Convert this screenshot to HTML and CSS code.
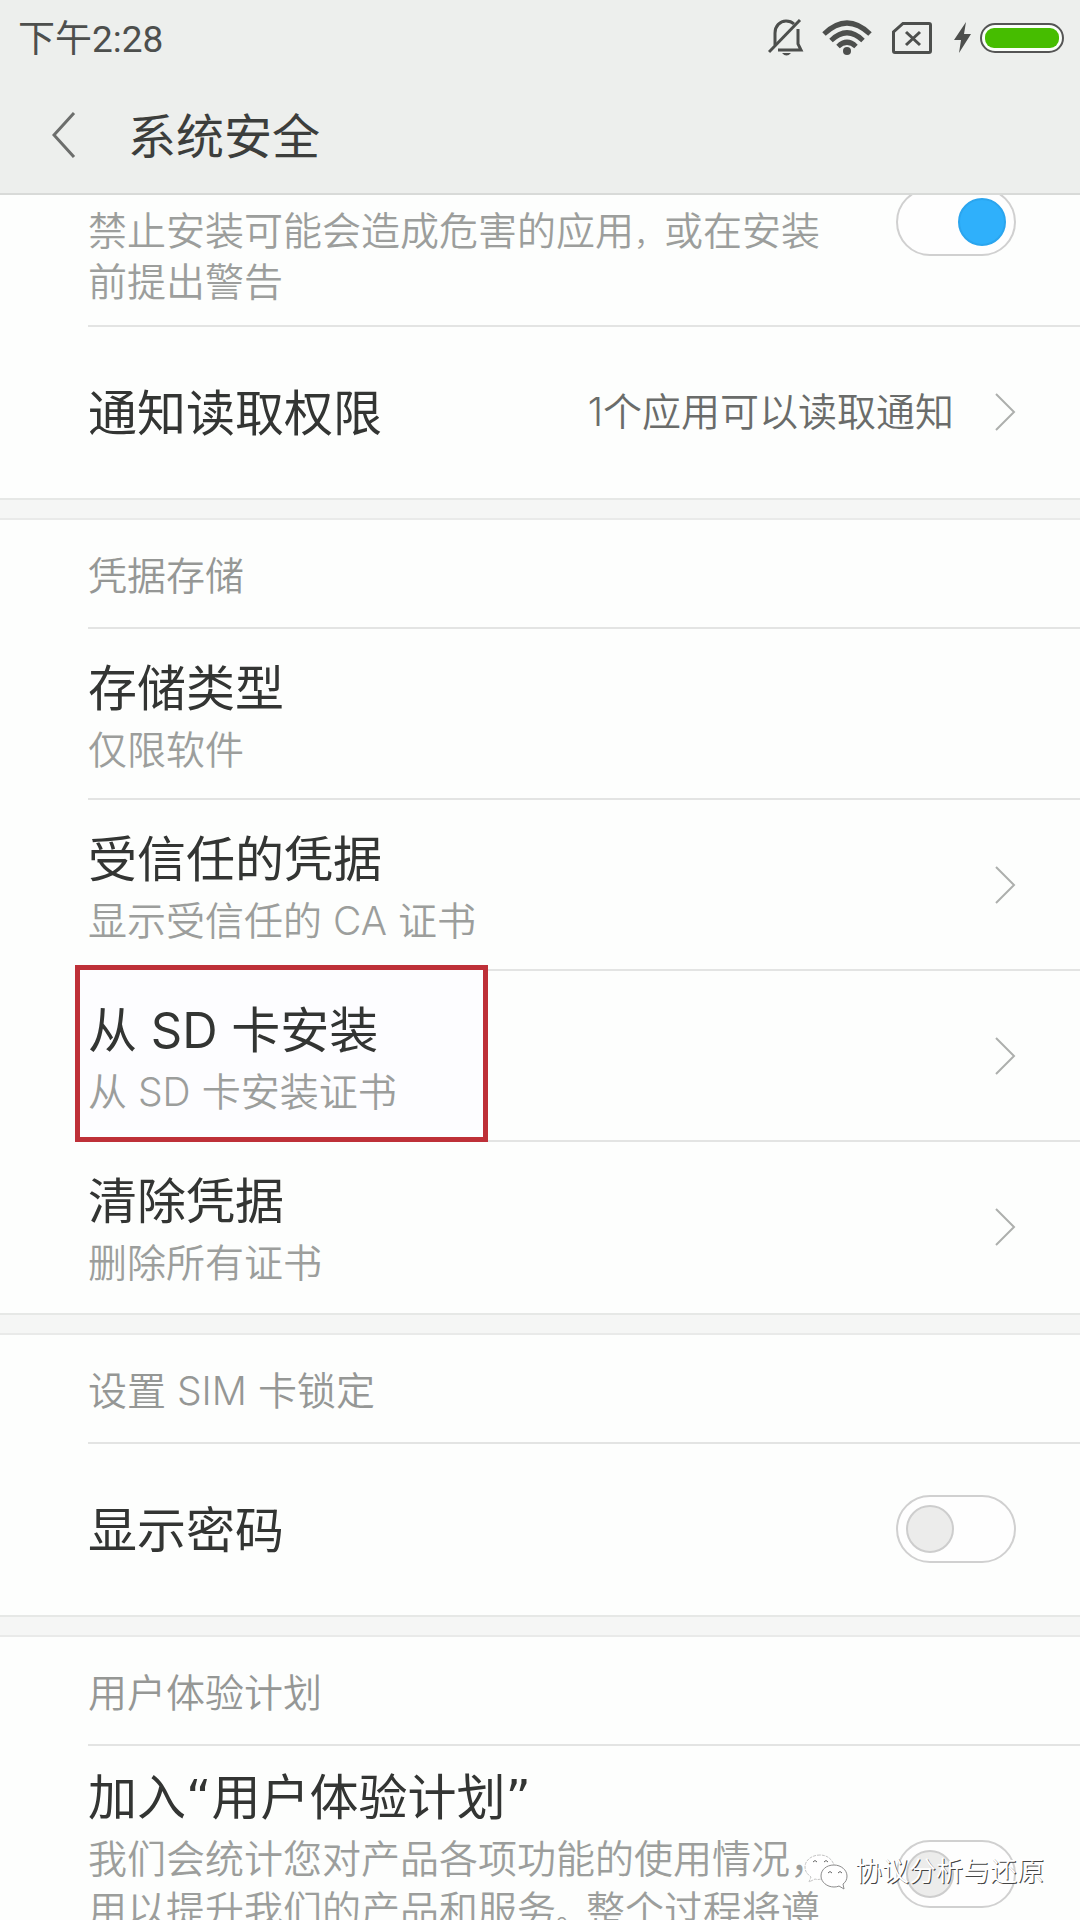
FILE: index.html
```html
<!DOCTYPE html>
<html lang="zh-CN">
<head>
<meta charset="utf-8">
<meta name="viewport" content="width=device-width, initial-scale=1">
<title>系统安全</title>
<link rel="stylesheet" href="styles.css">
</head>
<body>
<header class="top">
  <div class="status">
    <span class="time">下午2:28</span>
    <svg class="icon-bell" width="36" height="38" viewBox="0 0 36 38" fill="none" stroke="#4d4f4d" stroke-width="3">
      <path d="M7 26V14C7 7 12 2 18 2C21 2 24 3 26 5M30 10V25L33 31H10" />
      <path d="M1 33L32 1"/>
      <path d="M14 34Q18.500 39 23 34Z" fill="#4d4f4d" stroke="none"/>
    </svg>
    <svg class="icon-wifi" width="50" height="36" viewBox="0 0 50 36" fill="none" stroke="#4d4f4d" stroke-width="5">
      <path d="M2 14Q25-8 48 14M9 20.500Q25 5 41 20.500M16 26.500Q25 18 34 26.500"/>
      <circle cx="25" cy="31" r="4" fill="#4d4f4d" stroke="none"/>
    </svg>
    <svg class="icon-sim" width="40" height="32" viewBox="0 0 40 32" fill="none" stroke="#4d4f4d" stroke-width="3">
      <path d="M11 1.500H37Q38.500 1.500 38.500 3V29Q38.500 30.500 37 30.500H3Q1.500 30.500 1.500 29V10Z"/>
      <path d="M14 10L28 23M28 10L14 23"/>
    </svg>
    <svg class="icon-bolt" width="18" height="32" viewBox="0 0 18 32" fill="#4d4f4d"><path d="M12 0L0 18H7L5 31L17 12H10Z"/></svg>
    <svg class="icon-battery" width="84" height="30" viewBox="0 0 84 30">
      <rect x="1" y="1" width="82" height="28" rx="14" fill="#fbfffa" stroke="#555" stroke-width="2"/>
      <rect x="5" y="5" width="74" height="20" rx="9" fill="#46bd00"/>
    </svg>
  </div>
  <div class="titlebar">
    <button class="back" type="button" aria-label="返回">
      <svg width="24" height="46" viewBox="0 0 24 46" fill="none" stroke="#6c6e6c" stroke-width="3"><path d="M22 1L2 23L22 45"/></svg>
    </button>
    <h1 class="heading">系统安全</h1>
  </div>
</header>

<main class="list">
  <section class="group">
    <label class="row row-tall">
      <span class="text text-end"><span class="sub">禁止安装可能会造成危害的应用<span class="stop">，</span>或在安装前提出警告</span></span>
      <input class="toggle" type="checkbox" checked>
    </label>
    <a class="row" href="#notifications">
      <span class="text text-single"><span class="name">通知读取权限</span></span>
      <span class="value">1个应用可以读取通知</span>
      <svg class="chevron" width="22" height="38" viewBox="0 0 22 38"><path d="M2 1L20 19L2 37"/></svg>
    </a>
  </section>

  <section class="group">
    <h2 class="caption">凭据存储</h2>
    <div class="row">
      <span class="text"><span class="name">存储类型</span><span class="sub">仅限软件</span></span>
    </div>
    <a class="row" href="#trusted">
      <span class="text"><span class="name">受信任的凭据</span><span class="sub">显示受信任的 CA 证书</span></span>
      <svg class="chevron" width="22" height="38" viewBox="0 0 22 38"><path d="M2 1L20 19L2 37"/></svg>
    </a>
    <a class="row marked" href="#sd">
      <span class="text"><span class="name">从 SD 卡安装</span><span class="sub">从 SD 卡安装证书</span></span>
      <svg class="chevron" width="22" height="38" viewBox="0 0 22 38"><path d="M2 1L20 19L2 37"/></svg>
    </a>
    <a class="row" href="#clear">
      <span class="text"><span class="name">清除凭据</span><span class="sub">删除所有证书</span></span>
      <svg class="chevron" width="22" height="38" viewBox="0 0 22 38"><path d="M2 1L20 19L2 37"/></svg>
    </a>
  </section>

  <section class="group">
    <h2 class="caption">设置 SIM 卡锁定</h2>
    <label class="row">
      <span class="text text-single"><span class="name">显示密码</span></span>
      <input class="toggle" type="checkbox">
    </label>
  </section>

  <section class="group">
    <h2 class="caption">用户体验计划</h2>
    <label class="row row-plan">
      <span class="text text-start"><span class="name">加入<span class="quote">“</span>用户体验计划<span class="quote">”</span></span><span class="sub">我们会统计您对产品各项功能的使用情况，用以提升我们的产品和服务<span class="stop">。</span>整个过程将遵</span></span>
      <input class="toggle" type="checkbox">
    </label>
  </section>
</main>

<div class="watermark">
  <svg width="44" height="38" viewBox="0 0 44 38" fill="#fff" stroke="#8c8c8c" stroke-width="1">
    <path d="M16 2C8 2 1 7 1 14C1 18 3 21 7 24L5 29L11 26Q14 27 17 26L30 12C28 6 23 2 16 2Z" stroke="#c4c4c4" stroke-dasharray="3 1"/>
    <path d="M30 12C22 12 17 17 17 23C17 29 23 34 30 34Q33 34 35 33L40 36L39 31C42 29 43 26 43 23C43 17 37 12 30 12Z"/>
    <path d="M9 9Q11 6 13 9M20 9Q22 6 24 9M24 20Q26 17 28 20M34 20Q36 17 38 20" fill="none" stroke="#666"/>
  </svg>
  <span>协议分析与还原</span>
</div>
</body>
</html>
```

FILE: styles.css
```css
*,
*::before {
  box-sizing: border-box;
}

body {
  margin: 0;
  height: 100vh;
  display: flex;
  flex-direction: column;
  position: relative;
  overflow: hidden;
  background: #fdfefd;
  color: #333533;
  font-family: Inter, "Noto Sans CJK SC", sans-serif;
  font-weight: 350;
}

/* Status bar and title */
.top {
  flex: none;
  position: relative;
  z-index: 1;
  background: #edefed;
  border-bottom: 2px solid #d8dad8;
}

.status {
  height: 76px;
  padding: 0 16px 0 18px;
  display: flex;
  align-items: center;
}

.time {
  flex: 1;
  padding-top: 4px;
  font-family: Roboto, "Noto Sans CJK SC", sans-serif;
  font-size: 37px;
  line-height: 52px;
  font-weight: 400;
  color: #4d4f4d;
}

.icon-wifi { margin-left: 18px; }
.icon-sim { margin-left: 20px; }
.icon-bolt { margin-left: 22px; }
.icon-battery { margin-left: 8px; }

.titlebar {
  height: 117px;
  padding-left: 52px;
  display: flex;
  align-items: center;
}

.back {
  width: 76px;
  height: 46px;
  padding: 0;
  border: 0;
  background: none;
  text-align: left;
  line-height: 0;
}

.heading {
  margin: 0;
  padding-top: 4px;
  font-size: 48px;
  line-height: 71px;
  font-weight: 400;
  color: #3c3e3c;
}

/* The list is scrolled slightly under the header */
.list {
  flex: 1;
  min-height: 0;
  margin-top: -77px;
}

.group + .group::before {
  content: "";
  display: block;
  height: 22px;
  background: #f5f6f5;
  border-top: 2px solid #e6e8e6;
  border-bottom: 2px solid #e9eae9;
}

.caption {
  height: 109px;
  margin: 0 0 0 88px;
  padding-top: 30px;
  border-bottom: 2px solid #e3e4e3;
  font-size: 39px;
  line-height: 51px;
  font-weight: 350;
  color: #959795;
}

.row {
  position: relative;
  min-height: 171px;
  margin-left: 88px;
  padding-right: 64px;
  display: flex;
  align-items: center;
  gap: 40px;
  border-bottom: 2px solid #e3e4e3;
  color: inherit;
  text-decoration: none;
}

.row:last-child { border-bottom-color: transparent; }

.row-tall { min-height: 209px; }
.row-plan { min-height: 258px; }

.text {
  flex: 1;
  z-index: 1;
  display: flex;
  flex-direction: column;
}

.text-end { align-self: flex-end; padding-bottom: 18px; }
.text-start { align-self: flex-start; padding-top: 16px; }
.text-single { padding-top: 4px; }

.name {
  font-size: 49px;
  line-height: 71px;
  font-weight: 400;
}

.quote {
  font-family: "DejaVu Sans", sans-serif;
  line-height: 1;
}

.sub {
  font-size: 39px;
  line-height: 51px;
  color: #9c9e9c;
}

/* Punctuation inside a line is set smaller, to close the gap after it */
.stop {
  font-size: 30px;
  line-height: 1;
}

.value {
  font-size: 39px;
  line-height: 51px;
  color: #6a6c6a;
}

.chevron {
  flex: none;
  fill: none;
  stroke: #adafad;
  stroke-width: 2;
}

.toggle {
  appearance: none;
  flex: none;
  width: 120px;
  height: 68px;
  margin: 0;
  padding: 8px;
  border: 2px solid #d0d0d0;
  border-radius: 34px;
  background: #fefefe;
  display: flex;
}

.toggle::before {
  content: "";
  width: 48px;
  height: 48px;
  border: 2px solid #cdcdcd;
  border-radius: 50%;
  background: #ececeb;
}

.toggle:checked { justify-content: flex-end; }

.toggle:checked::before {
  border-color: #2ba5ee;
  background: #2fb0fb;
}

/* Red frame around the highlighted entry */
.marked::before {
  content: "";
  position: absolute;
  top: -6px;
  left: -13px;
  width: 413px;
  height: 177px;
  border: 5px solid #be3038;
  background: #fdfdff;
  z-index: 1;
}

.watermark {
  position: absolute;
  right: 36px;
  bottom: 28px;
  z-index: 2;
  display: flex;
  align-items: center;
  gap: 7px;
  font-size: 27px;
  line-height: 40px;
  color: #fff;
  text-shadow: 1px 1px 0 #444;
}
```
